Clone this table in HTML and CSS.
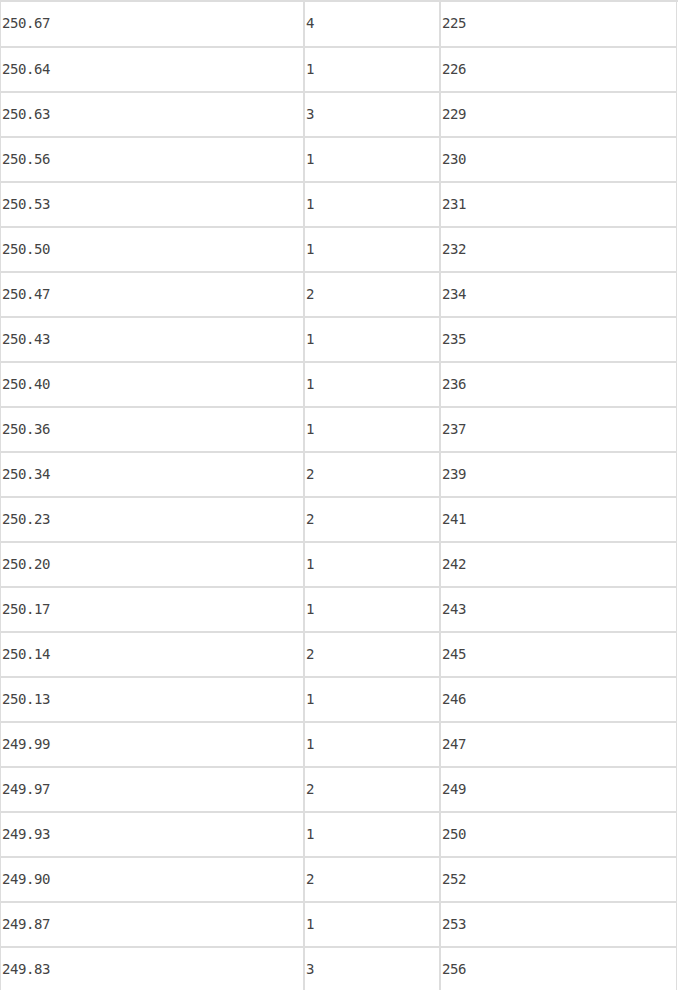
FILE: index.html
```html
<!DOCTYPE html>
<html lang="zh">
<head>
<meta charset="utf-8">
<title>价格分布</title>
<link rel="stylesheet" href="styles.css">
</head>
<body>
<div class="wrap">
<table class="grid">
<tbody>
<tr class="first"><td class="c1">250.67</td><td class="c2">4</td><td class="c3">225</td></tr>
<tr><td>250.64</td><td>1</td><td>226</td></tr>
<tr><td>250.63</td><td>3</td><td>229</td></tr>
<tr><td>250.56</td><td>1</td><td>230</td></tr>
<tr><td>250.53</td><td>1</td><td>231</td></tr>
<tr><td>250.50</td><td>1</td><td>232</td></tr>
<tr><td>250.47</td><td>2</td><td>234</td></tr>
<tr><td>250.43</td><td>1</td><td>235</td></tr>
<tr><td>250.40</td><td>1</td><td>236</td></tr>
<tr><td>250.36</td><td>1</td><td>237</td></tr>
<tr><td>250.34</td><td>2</td><td>239</td></tr>
<tr><td>250.23</td><td>2</td><td>241</td></tr>
<tr><td>250.20</td><td>1</td><td>242</td></tr>
<tr><td>250.17</td><td>1</td><td>243</td></tr>
<tr><td>250.14</td><td>2</td><td>245</td></tr>
<tr><td>250.13</td><td>1</td><td>246</td></tr>
<tr><td>249.99</td><td>1</td><td>247</td></tr>
<tr><td>249.97</td><td>2</td><td>249</td></tr>
<tr><td>249.93</td><td>1</td><td>250</td></tr>
<tr><td>249.90</td><td>2</td><td>252</td></tr>
<tr><td>249.87</td><td>1</td><td>253</td></tr>
<tr><td>249.83</td><td>3</td><td>256</td></tr>
</tbody>
</table>
</div>
</body>
</html>
```
FILE: styles.css
```css
html, body {
  margin: 0;
  padding: 0;
  background: #fff;
}
.wrap {
  border-top: 2px solid #dddddd;
}
.grid {
  border-collapse: separate;
  border-spacing: 0;
  table-layout: fixed;
  width: 677px;
  font-family: "DejaVu Sans Mono", "Liberation Mono", monospace;
  font-size: 14px;
  letter-spacing: -0.43px;
  color: #444;
}
.grid tr {
  height: 45px;
}
.grid td {
  box-sizing: border-box;
  border: 1px solid #dddddd;
  padding: 0 0 2px 1px;
  vertical-align: middle;
  text-align: left;
  white-space: nowrap;
}
.grid .first td {
  border-top: none;
}
.grid .c1 { width: 304px; }
.grid .c2 { width: 136px; }
.grid .c3 { width: 237px; }
```
